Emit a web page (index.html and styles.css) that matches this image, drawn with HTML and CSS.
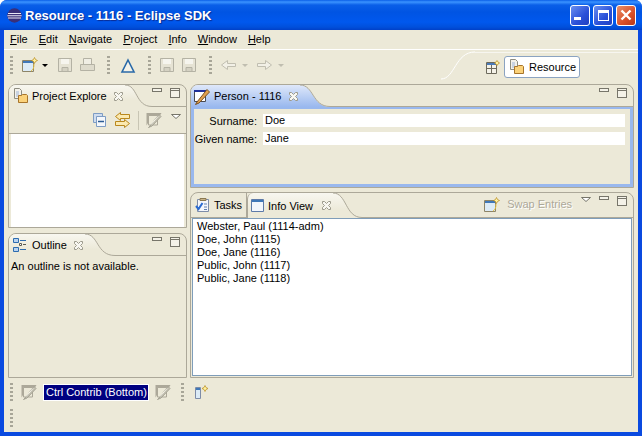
FILE: index.html

```html
<!DOCTYPE html>
<html lang="en">
<head>
    <meta charset="UTF-8">
    <title>Resource - 1116 - Eclipse SDK</title>
    <link rel="stylesheet" href="styles.css">
</head>
<body>
    <svg class="defs" width="0" height="0">
        <defs>
            <linearGradient id="activeTab" x1="0" y1="0" x2="0" y2="1">
                <stop offset="0" stop-color="#dfe8fa"/>
                <stop offset="1" stop-color="#99b8ee"/>
            </linearGradient>
            <linearGradient id="currentTab" x1="0" y1="0" x2="0" y2="1">
                <stop offset="0" stop-color="#f8f7f0"/>
                <stop offset=".7" stop-color="#ece9d8"/>
            </linearGradient>
            <symbol id="i-min" viewBox="0 0 10 4"><rect x=".5" y=".5" width="9" height="3" fill="#f4f2e8" stroke="#77756a"/></symbol>
            <symbol id="i-max" viewBox="0 0 10 10"><rect x=".5" y=".5" width="9" height="9" fill="#f4f2e8" stroke="#77756a"/><path d="M0 2.500h10" stroke="#77756a"/></symbol>
            <symbol id="i-x" viewBox="0 0 11 11"><path d="M1.500 1.500h2l2 2 2-2h2v2l-2 2 2 2v2h-2l-2-2-2 2h-2v-2l2-2-2-2z" fill="#f8f7f1" stroke="#9c9a8c"/></symbol>
            <symbol id="i-view" viewBox="0 0 16 16"><path d="M.5 1h15l-1.500 2.500h-11v6l-2.500 4z" fill="#aca899"/><path d="M2.500 3.500h9v9.500h-9z" fill="#ece9d8" stroke="#aca899"/><path d="M4 14l9-11.500 2 2-9 9.500-3.500 1.500z" fill="#c4c1b2" stroke="#a5a394"/><path d="M5 12.500l7-8" stroke="#f4f2e8"/></symbol>
            <symbol id="i-drop" viewBox="0 0 10 5"><path d="M.5.5h9l-4.500 4z" fill="#fff" stroke="#77756a"/></symbol>
            <symbol id="i-save" viewBox="0 0 16 16"><path d="M1.500 1.500h13v13h-13z" fill="#e6e3d4" stroke="#b4b2a4"/><path d="M4 2h8v5h-8z" fill="#f6f5ee"/><path d="M5 10.500h6v4h-6z" fill="#d4d1c2" stroke="#b4b2a4"/></symbol>
            <symbol id="i-folder" viewBox="0 0 16 16"><path d="M1.500.5h5l2 2v8h-7z" fill="#f3f1ea" stroke="#8f8d80"/><path d="M3 4h3M3 6h3M3 8h3" stroke="#9db4d8"/><path d="M5.500 7.500h3l1-1h4l1 1v7h-9z" fill="#fbd27a" stroke="#a8752a"/></symbol>
            <symbol id="i-newwin" viewBox="0 0 16 16"><path d="M.5 3.500h11v11h-11z" fill="#dcebf6" stroke="#8d8467"/><path d="M1 4h10v2h-10z" fill="#3f78b8"/><path d="M9 14c2-1 3-3 3-7" stroke="#e8c040" fill="none"/><path d="M12.500 .5l1 2 2 1-2 1-1 2-1-2-2-1 2-1z" fill="#fff3a0" stroke="#b98a1c" stroke-width=".7"/></symbol>
        </defs>
    </svg>

    <div class="window">
        <div class="titlebar">
            <svg class="app-icon" width="15" height="15" viewBox="0 0 15 15">
                <circle cx="7.500" cy="7.500" r="7.200" fill="#3a2f78"/>
                <path d="M1 5.500h13M.4 7.800h14.200M1 10h13" stroke="#e8e6f4" stroke-width="1.100"/>
            </svg>
            <span class="title-text">Resource - 1116 - Eclipse SDK</span>
            <div class="win-btns">
                <div class="win-btn"><span class="glyph-min"></span></div>
                <div class="win-btn"><span class="glyph-max"></span></div>
                <div class="win-btn win-close">
                    <svg width="12" height="12" viewBox="0 0 12 12"><path d="M1.500 1.500l9 9M10.500 1.500l-9 9" stroke="#fff" stroke-width="2.400"/></svg>
                </div>
            </div>
        </div>

        <div class="client">
            <div class="menubar">
                <span class="menu-item"><u>F</u>ile</span>
                <span class="menu-item"><u>E</u>dit</span>
                <span class="menu-item"><u>N</u>avigate</span>
                <span class="menu-item"><u>P</u>roject</span>
                <span class="menu-item"><u>I</u>nfo</span>
                <span class="menu-item"><u>W</u>indow</span>
                <span class="menu-item"><u>H</u>elp</span>
            </div>

            <div class="toolbar">
                <span class="handle"></span>
                <svg class="tb-new" width="16" height="16"><use href="#i-newwin"/></svg>
                <span class="tb-arrow"></span>
                <svg class="tb-save" width="16" height="16"><use href="#i-save"/></svg>
                <svg class="tb-print" width="17" height="16" viewBox="0 0 17 16">
                    <path d="M4.500 1.500h8v6h-8z" fill="#f0eee4" stroke="#b4b2a4"/>
                    <path d="M1.500 7.500h14v6h-14z" fill="#dedbcc" stroke="#b4b2a4"/>
                </svg>
                <span class="handle tb-h2"></span>
                <svg class="tb-delta" width="16" height="15" viewBox="0 0 16 15"><path d="M8 2l6 12h-12z" fill="#f4f2e8" stroke="#2a6aa8" stroke-width="1.600"/></svg>
                <span class="handle tb-h3"></span>
                <svg class="tb-save2" width="16" height="16"><use href="#i-save"/></svg>
                <svg class="tb-saveall" width="16" height="16"><use href="#i-save"/></svg>
                <span class="handle tb-h4"></span>
                <svg class="tb-back" width="20" height="12" viewBox="0 0 20 12"><path d="M7.500 1.500l-6 4.500 6 4.500v-3h8v-3h-8z" fill="#f2f0e6" stroke="#c0beb0"/></svg>
                <span class="tb-arrow tb-arrow-off"></span>
                <svg class="tb-fwd" width="20" height="12" viewBox="0 0 20 12"><path d="M9.500 1.500l6 4.500-6 4.500v-3h-8v-3h8z" fill="#f2f0e6" stroke="#c0beb0"/></svg>
                <span class="tb-arrow tb-arrow-off"></span>
                <svg class="tb-curve" width="34" height="30" viewBox="0 0 34 30"><path d="M0 29c14 0 14-27 34-27" fill="none" stroke="#fff"/></svg>
                <span class="tb-line"></span>
                <svg class="tb-persp" width="14" height="14" viewBox="0 0 14 14">
                    <path d="M.5 2.500h10v11h-10z" fill="#f4f2e8" stroke="#6d6a5c"/>
                    <path d="M1 3h9v2h-9z" fill="#4a7ab8"/>
                    <path d="M5.500 5v8M1 8.500h9" stroke="#6d6a5c"/>
                    <path d="M11 .5l1 1.500 1.500 1-1.500 1-1 1.500-1-1.500-1.500-1 1.500-1z" fill="#fff3a0" stroke="#b98a1c" stroke-width=".7"/>
                </svg>
                <div class="persp-btn">
                    <svg width="16" height="16"><use href="#i-folder"/></svg>
                    <span>Resource</span>
                </div>
            </div>

            <div class="workarea">
                <div class="col-left">
                    <section class="panel panel-explorer">
                        <div class="tabs">
                            <div class="tab tab-current">
                                <svg width="16" height="16"><use href="#i-folder"/></svg>
                                <span class="tab-label">Project Explore</span>
                                <svg class="tab-x" width="11" height="11"><use href="#i-x"/></svg>
                            </div>
                            <svg class="tail" width="27" height="22" viewBox="0 0 27 22">
                                <path d="M0 0c13 0 10 22 27 22h-27z" fill="url(#currentTab)"/>
                                <path d="M0 0c13 0 10 21.500 27 21.500" fill="none" stroke="#aca899"/>
                            </svg>
                            <div class="tabs-rest">
                                <svg width="10" height="4"><use href="#i-min"/></svg>
                                <svg class="ctl-max" width="10" height="10"><use href="#i-max"/></svg>
                            </div>
                        </div>
                        <div class="view-tools">
                            <svg width="13" height="14" viewBox="0 0 13 14">
                                <path d="M.5.5h9v9h-9z" fill="#cfdcee" stroke="#7d9cc4"/>
                                <path d="M3.500 3.500h9v10h-9z" fill="#f4f7fb" stroke="#7d9cc4"/>
                                <path d="M5 8.500h6" stroke="#2c5c94" stroke-width="1.500"/>
                            </svg>
                            <svg class="vt-link" width="17" height="16" viewBox="0 0 17 16">
                                <path d="M6.500.5l-5 4 5 4v-2h9v-4h-9z" fill="#fbe9b0" stroke="#b9871c"/>
                                <path d="M10.500 7.500l5 4-5 4v-2h-9v-4h9z" fill="#fbe9b0" stroke="#b9871c"/>
                            </svg>
                            <span class="vt-sep"></span>
                            <svg width="16" height="16"><use href="#i-view"/></svg>
                            <svg class="vt-drop" width="10" height="5"><use href="#i-drop"/></svg>
                        </div>
                        <div class="view-white"></div>
                    </section>

                    <section class="panel panel-outline">
                        <div class="tabs">
                            <div class="tab tab-current">
                                <svg width="14" height="14" viewBox="0 0 14 14">
                                    <path d="M.5.5h5v4h-5zM.5 9.500h5v4h-5z" fill="#b9d3f0" stroke="#2d6cb0"/>
                                    <path d="M7 2.500h6M7 11.500h6" stroke="#2d6cb0"/>
                                    <path d="M6.500 5.500h2v2h-2z" fill="#fff" stroke="#5a5a50"/>
                                    <path d="M10 6.500h3" stroke="#5a5a50"/>
                                </svg>
                                <span class="tab-label">Outline</span>
                                <svg class="tab-x" width="11" height="11"><use href="#i-x"/></svg>
                            </div>
                            <svg class="tail" width="30" height="22" viewBox="0 0 30 22">
                                <path d="M0 0c14 0 11 22 30 22h-30z" fill="url(#currentTab)"/>
                                <path d="M0 0c14 0 11 21.500 30 21.500" fill="none" stroke="#aca899"/>
                            </svg>
                            <div class="tabs-rest">
                                <svg width="10" height="4"><use href="#i-min"/></svg>
                                <svg class="ctl-max" width="10" height="10"><use href="#i-max"/></svg>
                            </div>
                        </div>
                        <p class="outline-msg">An outline is not available.</p>
                    </section>
                </div>

                <div class="col-right">
                    <section class="panel panel-editor">
                        <div class="tabs">
                            <div class="tab tab-active">
                                <svg width="17" height="17" viewBox="0 0 17 17">
                                    <path d="M.5 2.500h11v11h-11z" fill="#fff" stroke="#4a4a50"/>
                                    <path d="M0 2h12v2h-12z" fill="#20309a"/>
                                    <path d="M3 14l10-12.500 2.500 2.500-10.500 11-3.500 1.500z" fill="#e0a050" stroke="#7a5020"/>
                                </svg>
                                <span class="tab-label">Person - 1116</span>
                                <svg class="tab-x" width="11" height="11"><use href="#i-x"/></svg>
                            </div>
                            <svg class="tail" width="30" height="22" viewBox="0 0 30 22">
                                <path d="M0 0c14 0 12 22 30 22h-30z" fill="url(#activeTab)"/>
                                <path d="M0 0c14 0 12 21.500 30 21.500" fill="none" stroke="#aca899"/>
                            </svg>
                            <div class="tabs-rest">
                                <svg width="10" height="4"><use href="#i-min"/></svg>
                                <svg class="ctl-max" width="10" height="10"><use href="#i-max"/></svg>
                            </div>
                        </div>
                        <div class="form">
                            <div class="form-row">
                                <label class="form-label">Surname:</label>
                                <div class="form-field">Doe</div>
                            </div>
                            <div class="form-row">
                                <label class="form-label">Given name:</label>
                                <div class="form-field">Jane</div>
                            </div>
                        </div>
                    </section>

                    <section class="panel panel-info">
                        <div class="tabs">
                            <div class="tab tab-other">
                                <svg width="16" height="16" viewBox="0 0 16 16">
                                    <path d="M2.500 2.500h11v12h-11z" fill="#f4f6fb" stroke="#7d8ca8"/>
                                    <path d="M5 1.500h6v2h-6z" fill="#c8b48a" stroke="#8a7850"/>
                                    <path d="M1 9l2.500 3 4-6" fill="none" stroke="#2a6ad0" stroke-width="2"/>
                                    <path d="M9 7h3M9 10h3M9 12.500h3" stroke="#6080b0"/>
                                </svg>
                                <span class="tab-label">Tasks</span>
                            </div>
                            <div class="tab tab-current tab-info">
                                <svg width="13" height="13" viewBox="0 0 13 13">
                                    <path d="M.5.5h12v12h-12z" fill="#f2f6fc" stroke="#5d7aa8"/>
                                    <path d="M1 1h11v2h-11z" fill="#3f78b8"/>
                                </svg>
                                <span class="tab-label">Info View</span>
                                <svg class="tab-x" width="11" height="11"><use href="#i-x"/></svg>
                            </div>
                            <svg class="tail" width="29" height="25" viewBox="0 0 29 25">
                                <path d="M0 0c14 0 12 25 29 25h-29z" fill="url(#currentTab)"/>
                                <path d="M0 0c14 0 12 24.500 29 24.500" fill="none" stroke="#aca899"/>
                            </svg>
                            <div class="tabs-rest">
                                <svg class="swap-icon" width="16" height="16"><use href="#i-newwin"/></svg>
                                <span class="swap-label">Swap Entries</span>
                                <svg class="swap-drop" width="10" height="5"><use href="#i-drop"/></svg>
                                <svg class="swap-min" width="10" height="4"><use href="#i-min"/></svg>
                                <svg class="ctl-max" width="10" height="10"><use href="#i-max"/></svg>
                            </div>
                        </div>
                        <ul class="entries">
                            <li>Webster, Paul (1114-adm)</li>
                            <li>Doe, John (1115)</li>
                            <li>Doe, Jane (1116)</li>
                            <li>Public, John (1117)</li>
                            <li>Public, Jane (1118)</li>
                        </ul>
                    </section>
                </div>
            </div>

            <div class="bottom-row">
                <span class="handle"></span>
                <svg class="br-view" width="16" height="16"><use href="#i-view"/></svg>
                <span class="ctrl-contrib">Ctrl Contrib (Bottom)</span>
                <svg class="br-view2" width="16" height="16"><use href="#i-view"/></svg>
                <span class="handle br-h2"></span>
                <svg class="br-fast" width="15" height="15" viewBox="0 0 15 15">
                    <path d="M1.500 2.500h5v11h-5z" fill="#dcebf6" stroke="#7d8ca8"/>
                    <path d="M2 3h4v2h-4z" fill="#3f78b8"/>
                    <path d="M11 .5l1 2 2 1-2 1-1 2-1-2-2-1 2-1z" fill="#fff3a0" stroke="#b98a1c" stroke-width=".7"/>
                </svg>
            </div>
            <div class="status-row">
                <span class="handle"></span>
            </div>
        </div>
    </div>
</body>
</html>
```

FILE: styles.css

```css
html, body {
    margin: 0;
    padding: 0;
    background-color: #fff;
}

body {
    font-family: "Liberation Sans", sans-serif;
    font-size: 11px;
    color: #000;
    overflow: hidden;
    white-space: nowrap;
}

.defs {
    display: block;
    height: 0;
}

svg {
    display: block;
    flex: none;
}

.window {
    width: 642px;
    height: 436px;
    display: flex;
    flex-direction: column;
    background-color: #0a4ae0;
    border-radius: 7px 7px 0 0;
    overflow: hidden;
}

/* title bar */
.titlebar {
    height: 30px;
    display: flex;
    align-items: center;
    padding-left: 7px;
    background: linear-gradient(#0a5fe8 0, #3b93ff 2px, #0a5fe8 5px, #0054e3 12px, #0058ee 22px, #0050dc 27px, #0040c8 30px);
}

.title-text {
    margin-left: 3px;
    color: #fff;
    font-weight: bold;
    font-size: 13px;
    text-shadow: 1px 1px 1px #0a2a90;
}

.win-btns {
    margin-left: auto;
    margin-right: 6px;
    display: flex;
    gap: 3px;
}

.win-btn {
    width: 18px;
    height: 19px;
    display: flex;
    align-items: center;
    justify-content: center;
    border: 1px solid #fff;
    border-radius: 3px;
    background: linear-gradient(135deg, #6a8ff0, #2a50d8 60%, #2040c0);
}

.win-close {
    background: linear-gradient(135deg, #e8906a, #d8502a 60%, #b83818);
}

.glyph-min {
    width: 7px;
    height: 3px;
    background-color: #fff;
    margin: 7px 5px 0 0;
}

.glyph-max {
    box-sizing: border-box;
    width: 11px;
    height: 11px;
    border: 1px solid #fff;
    border-top-width: 3px;
}

.client {
    flex: 1;
    margin: 0 4px 4px;
    background-color: #ece9d8;
    display: flex;
    flex-direction: column;
    min-height: 0;
}

/* menu */
.menubar {
    height: 18px;
    display: flex;
    align-items: center;
    padding: 0 0 1px 6px;
    gap: 11px;
    border-bottom: 1px solid #fff;
}

/* main toolbar */
.toolbar {
    height: 30px;
    display: flex;
    align-items: center;
    position: relative;
    padding-left: 6px;
}

.handle {
    width: 3px;
    height: 18px;
    flex: none;
    background: repeating-linear-gradient(#a8a698 0 2px, transparent 2px 4px);
}

.tb-new { margin-left: 9px; }
.tb-save { margin-left: 9px; }
.tb-print { margin-left: 6px; }
.tb-h2 { margin-left: 11px; }
.tb-delta { margin-left: 10px; }
.tb-h3 { margin-left: 12px; }
.tb-save2 { margin-left: 8px; }
.tb-saveall { margin-left: 6px; }
.tb-h4 { margin-left: 12px; }
.tb-back { margin-left: 8px; }
.tb-fwd { margin-left: 8px; }

.tb-arrow {
    margin-left: 4px;
    border: 3px solid transparent;
    border-top: 3px solid #000;
    border-bottom: 0;
}

.tb-arrow-off {
    border-top-color: #c0beb0;
    margin-left: 2px;
}

.tb-curve {
    margin-left: 157px;
    align-self: flex-start;
}

.tb-line {
    position: absolute;
    top: 2px;
    left: 471px;
    right: 0;
    height: 1px;
    background-color: #f7f6f0;
}

.tb-persp { margin-left: 11px; margin-top: 4px; }

.persp-btn {
    margin-left: 4px;
    margin-top: 4px;
    width: 76px;
    height: 22px;
    box-sizing: border-box;
    display: flex;
    align-items: center;
    gap: 4px;
    padding-left: 4px;
    background-color: #fff;
    border: 1px solid #8ba3c1;
    border-radius: 3px;
}

/* views */
.workarea {
    height: 294px;
    margin-top: 4px;
    padding: 0 4px;
    display: flex;
    gap: 3px;
}

.col-left {
    width: 179px;
    flex: none;
    display: flex;
    flex-direction: column;
    gap: 5px;
}

.col-right {
    flex: 1;
    display: flex;
    flex-direction: column;
    gap: 4px;
    min-width: 0;
}

.panel {
    box-sizing: border-box;
    border: 1px solid #aca899;
    border-radius: 8px 8px 0 0;
    display: flex;
    flex-direction: column;
    overflow: hidden;
}

.panel-explorer { height: 144px; }
.panel-outline { flex: 1; }
.panel-editor { height: 104px; }
.panel-info { flex: 1; }

.tabs {
    height: 22px;
    flex: none;
    display: flex;
    align-items: stretch;
}

.tab {
    display: flex;
    align-items: center;
    padding: 0 1px 0 4px;
    box-sizing: border-box;
}

.tab-label { margin-left: 3px; }

.tab-current {
    background: linear-gradient(#f8f7f0, #ece9d8 70%);
}

.tab-x { margin-left: auto; }

.panel-explorer .tab { width: 119px; }
.panel-outline .tab { width: 76px; }
.panel-outline .tab-label { margin-left: 5px; }

.tabs-rest {
    flex: 1;
    display: flex;
    align-items: flex-start;
    justify-content: flex-end;
    padding: 3px 6px 0 0;
    border-bottom: 1px solid #aca899;
}

.ctl-max { margin-left: 8px; }

.tab-active {
    width: 109px;
    padding-left: 3px;
    background: linear-gradient(#dfe8fa, #99b8ee);
}

.view-tools {
    height: 26px;
    display: flex;
    align-items: center;
    justify-content: flex-start;
    padding-left: 84px;
    border-bottom: 1px solid #aca899;
}

.vt-link { margin-left: 8px; }

.vt-sep {
    width: 1px;
    height: 19px;
    margin: 0 7px;
    background-color: #c8c5b4;
}

.vt-drop { margin: -8px 0 0 9px; }

.view-white {
    flex: 1;
    margin: 0 2px;
    background-color: #fff;
}

.outline-msg {
    margin: 4px 0 0 2px;
}

/* person editor */
.form {
    flex: 1;
    border: 3px solid #99b8ee;
    border-top-width: 2px;
    padding: 5px 5px 0 0;
    display: flex;
    flex-direction: column;
    gap: 5px;
}

.form-row {
    display: flex;
    align-items: center;
}

.form-label {
    width: 63px;
    text-align: right;
}

.form-field {
    flex: 1;
    height: 13px;
    line-height: 13px;
    margin-left: 6px;
    padding-left: 2px;
    background-color: #fff;
}

/* info view */
.panel-info .tabs {
    height: 25px;
}

.tab-other {
    width: 56px;
    border-right: 1px solid #aca899;
    border-bottom: 1px solid #aca899;
}

.tab-info {
    width: 86px;
    padding-left: 3px;
    border-left: 1px solid #aca899;
    border-radius: 6px 0 0 0;
}

.tab-info .tab-label { margin-left: 4px; }

.swap-icon { margin-top: 1px; }

.swap-label {
    margin: 2px 9px 0 7px;
    color: #aca899;
    text-shadow: 1px 1px 0 #fff;
}

.swap-drop { margin: 1px 8px 0 0; }

.entries {
    list-style: none;
    flex: 1;
    margin: 0 1px 1px;
    padding: 1px 0 0 4px;
    background-color: #fff;
    border: 1px solid #7f9db9;
}

.entries li {
    height: 13px;
    line-height: 13px;
}

/* bottom trim */
.bottom-row {
    height: 22px;
    margin-top: 3px;
    padding-left: 6px;
    display: flex;
    align-items: center;
}

.br-view { margin-left: 8px; }

.ctrl-contrib {
    margin-left: 6px;
    padding: 0 1px 0 2px;
    height: 17px;
    line-height: 15px;
    box-sizing: border-box;
    background-color: #000080;
    border: 1px solid #fff;
    color: #fff;
}

.br-view2 { margin-left: 6px; }
.br-h2 { margin-left: 10px; }
.br-fast { margin-left: 10px; }

.status-row {
    flex: 1;
    padding-left: 6px;
    display: flex;
    align-items: center;
}
```
